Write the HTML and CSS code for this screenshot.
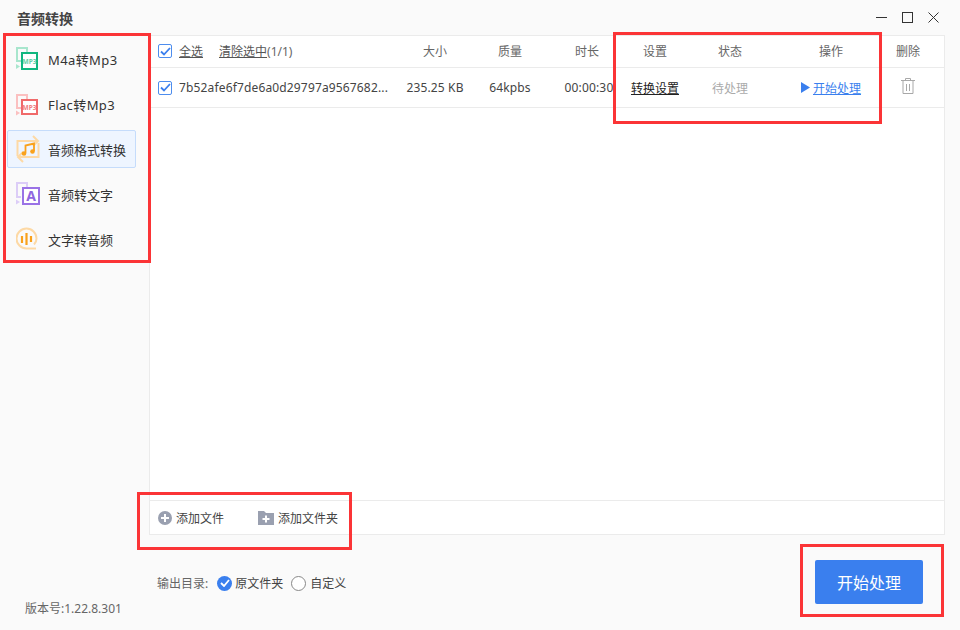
FILE: index.html
```html
<!DOCTYPE html>
<html lang="zh-CN">
<head>
    <meta charset="UTF-8">
    <title>音频转换</title>
    <link rel="stylesheet" href="styles.css">
</head>
<body>
    <div class="window">
        <!-- 标题栏 -->
        <div class="titlebar">
            <span class="title">音频转换</span>
            <div class="win-buttons">
                <svg width="11" height="11" viewBox="0 0 11 11"><path d="M0 5.500h11" stroke="#333" fill="none"/></svg>
                <svg width="11" height="11" viewBox="0 0 11 11"><rect x="0.500" y="0.500" width="10" height="10" stroke="#333" fill="none"/></svg>
                <svg width="11" height="11" viewBox="0 0 11 11"><path d="M0.500 0.500l10 10M10.500 0.500l-10 10" stroke="#333" fill="none"/></svg>
            </div>
        </div>

        <div class="main">
            <!-- 左侧菜单 -->
            <div class="sidebar">
                <div class="menu">
                    <div class="menu-item">
                        <svg class="menu-icon" width="24" height="24" viewBox="0 0 24 24">
                            <path d="M5 14H1V1h10v4" fill="none" stroke="#a8e6cd" stroke-width="2"/>
                            <path d="M0 17l4 2.500L0 22z" fill="#a8e6cd"/>
                            <rect x="6" y="6" width="15" height="16" fill="#fff" stroke="#10b77f" stroke-width="2"/>
                            <text class="icon-text" x="13.500" y="17" fill="#5fd0a5" text-anchor="middle">MP3</text>
                        </svg>
                        <span class="latin">M4a转Mp3</span>
                    </div>
                    <div class="menu-item">
                        <svg class="menu-icon" width="24" height="24" viewBox="0 0 24 24">
                            <path d="M5 16H1V3h10v4" fill="none" stroke="#fbc0c0" stroke-width="2"/>
                            <path d="M0 18.500l4 2.500-4 2.500z" fill="#fbc0c0"/>
                            <rect x="6" y="8" width="15" height="14" fill="#fff" stroke="#f06a6a" stroke-width="2"/>
                            <text class="icon-text" x="13.500" y="18" fill="#f07f7f" text-anchor="middle">MP3</text>
                        </svg>
                        <span class="latin">Flac转Mp3</span>
                    </div>
                    <div class="menu-item active">
                        <svg class="menu-icon" width="24" height="28" viewBox="0 0 24 28">
                            <path d="M1.500 21V6H22" fill="none" stroke="#fdd9a5" stroke-width="2"/>
                            <path d="M17 1l5 5-5 5" fill="none" stroke="#fdd9a5" stroke-width="2"/>
                            <path d="M22.500 8v14H2" fill="none" stroke="#fdd9a5" stroke-width="2"/>
                            <path d="M7 17l-5 5 5 5" fill="none" stroke="#fdd9a5" stroke-width="2"/>
                            <path d="M9.500 18V10.500l8.500-2V16" fill="none" stroke="#f9a11b" stroke-width="1.800"/>
                            <circle cx="8" cy="18.500" r="2.300" fill="#f9a11b"/>
                            <circle cx="16.500" cy="16.500" r="2.300" fill="#f9a11b"/>
                        </svg>
                        <span>音频格式转换</span>
                    </div>
                    <div class="menu-item">
                        <svg class="menu-icon" width="24" height="24" viewBox="0 0 24 24">
                            <path d="M5 15H1V1h10v4" fill="none" stroke="#dccdf7" stroke-width="2"/>
                            <path d="M0 17.500l4 2.500-4 2.500z" fill="#dccdf7"/>
                            <rect x="7" y="6" width="16" height="16" fill="#fff" stroke="#9a72e6" stroke-width="2"/>
                            <text class="icon-letter" x="15" y="19" fill="#8f66e0" text-anchor="middle">A</text>
                        </svg>
                        <span>音频转文字</span>
                    </div>
                    <div class="menu-item">
                        <svg class="menu-icon" width="24" height="24" viewBox="0 0 24 24">
                            <path d="M20 21.500h-9.500A10 10 0 1 1 20.500 11.500c0 2.500-1 4.500-2.500 6" fill="none" stroke="#fdd9a5" stroke-width="2"/>
                            <path d="M6 9v7M10.500 6v12M15 9v6" stroke="#f9a11b" stroke-width="2.200" fill="none"/>
                        </svg>
                        <span>文字转音频</span>
                    </div>
                </div>
                <div class="version">版本号:1.22.8.301</div>
            </div>

            <div class="content">
                <!-- 文件列表 -->
                <div class="panel">
                    <div class="row head">
                        <div class="cell-name">
                            <span class="check"><svg width="11" height="9" viewBox="0 0 11 9"><path d="M1 4.500l3 3 6-6.500" fill="none" stroke="#3a7fee" stroke-width="1.800"/></svg></span>
                            <a class="link-plain select-all">全选</a>
                            <span><a class="link-plain">清除选中</a>(1/1)</span>
                        </div>
                        <div class="cell">大小</div>
                        <div class="cell">质量</div>
                        <div class="cell">时长</div>
                        <div class="cell">设置</div>
                        <div class="cell">状态</div>
                        <div class="cell">操作</div>
                        <div class="cell">删除</div>
                    </div>
                    <div class="row file">
                        <div class="cell-name">
                            <span class="check"><svg width="11" height="9" viewBox="0 0 11 9"><path d="M1 4.500l3 3 6-6.500" fill="none" stroke="#3a7fee" stroke-width="1.800"/></svg></span>
                            <span class="file-name">7b52afe6f7de6a0d29797a9567682...</span>
                        </div>
                        <div class="cell num">235.25 KB</div>
                        <div class="cell num">64kpbs</div>
                        <div class="cell num duration">00:00:30</div>
                        <div class="cell"><a class="link-dark">转换设置</a></div>
                        <div class="cell muted">待处理</div>
                        <div class="cell action">
                            <svg width="9" height="11" viewBox="0 0 9 11"><path d="M0 0l9 5.500L0 11z" fill="#3a7fee"/></svg>
                            <a class="link-blue">开始处理</a>
                        </div>
                        <div class="cell">
                            <svg class="trash" width="14" height="16" viewBox="0 0 14 16"><path d="M0 2.500h14M4.500 2V0.500h5V2M2 3v12.500h10V3M5.500 6v7M8.500 6v7" fill="none" stroke="#a8a8a8"/></svg>
                        </div>
                    </div>
                    <div class="list-space"></div>
                    <div class="toolbar">
                        <span class="tool">
                            <svg width="14" height="14" viewBox="0 0 14 14"><circle cx="7" cy="7" r="7" fill="#9aa0b0"/><path d="M3 7h8M7 3v8" stroke="#fff" stroke-width="2"/></svg>
                            添加文件
                        </span>
                        <span class="tool">
                            <svg width="16" height="14" viewBox="0 0 16 14"><path d="M0 0h6l2 2h8v12H0z" fill="#9aa0b0"/><path d="M4.500 8h7M8 4.500v7" stroke="#fff" stroke-width="2"/></svg>
                            添加文件夹
                        </span>
                    </div>
                </div>

                <!-- 底部 -->
                <div class="bottom">
                    <div class="output">
                        <span class="output-label">输出目录:</span>
                        <span class="radio-on"><svg width="10" height="8" viewBox="0 0 10 8"><path d="M1 4l3 3 5-6" fill="none" stroke="#fff" stroke-width="1.800"/></svg></span>
                        <span class="radio-text">原文件夹</span>
                        <span class="radio-off"></span>
                        <span class="radio-text">自定义</span>
                    </div>
                    <button class="start-button" type="button">开始处理</button>
                </div>
            </div>
        </div>

        <!-- 标注框 -->
        <div class="mark mark-menu"></div>
        <div class="mark mark-columns"></div>
        <div class="mark mark-add"></div>
        <div class="mark mark-start"></div>
    </div>
</body>
</html>
```

FILE: styles.css
```css
* {
    box-sizing: border-box;
}
body {
    margin: 0;
    font-family: "Noto Sans", "Noto Sans CJK SC", sans-serif;
    font-size: 12px;
    color: #333;
    background-color: #fafafa;
    overflow: hidden;
}
.window {
    position: relative;
    width: 960px;
    height: 630px;
    display: flex;
    flex-direction: column;
}
.titlebar {
    height: 35px;
    display: flex;
    align-items: center;
    justify-content: space-between;
    padding: 0 21px 0 17px;
}
.title {
    font-size: 14px;
    font-weight: bold;
    color: #444;
}
.win-buttons {
    display: flex;
    gap: 15px;
}
.main {
    flex: 1;
    display: flex;
}
.sidebar {
    width: 149px;
    padding: 5px 0 0 7px;
    display: flex;
    flex-direction: column;
    justify-content: space-between;
}
.menu {
    display: flex;
    flex-direction: column;
    gap: 7px;
    width: 129px;
}
.menu-item {
    height: 38px;
    display: flex;
    align-items: center;
    gap: 8px;
    padding-left: 8px;
    font-size: 13px;
    color: #333;
    border: 1px solid transparent;
    border-radius: 2px;
}
.menu-item.active {
    background-color: #eef5ff;
    border-color: #c5dcfb;
}
.menu-icon {
    flex: none;
}
.icon-text {
    font-family: "Noto Sans", sans-serif;
    font-size: 6.500px;
    font-weight: bold;
}
.icon-letter {
    font-family: "Noto Sans", sans-serif;
    font-size: 14px;
    font-weight: bold;
}
.latin {
    letter-spacing: 0.4px;
}
.version {
    margin: 0 0 13px 18px;
    color: #666;
}
.content {
    flex: 1;
    display: flex;
    flex-direction: column;
    padding-right: 15px;
}
.panel {
    height: 500px;
    display: flex;
    flex-direction: column;
    background: white;
    border: 1px solid #ebebeb;
}
.row {
    display: grid;
    grid-template-columns: 248px 74px 76px 78px 58px 92px 110px 44px;
    align-items: center;
    border-bottom: 1px solid #ebebeb;
}
.head {
    height: 32px;
    padding-bottom: 1px;
    color: #666;
}
.file {
    height: 40px;
    color: #444;
}
.cell {
    display: flex;
    align-items: center;
    justify-content: center;
    white-space: nowrap;
    overflow: hidden;
}
.cell-name {
    display: flex;
    align-items: center;
    padding-left: 8px;
}
.check {
    width: 14px;
    height: 14px;
    margin-right: 7px;
    display: flex;
    align-items: center;
    justify-content: center;
    border: 1px solid #4d8dee;
    border-radius: 2px;
}
.select-all {
    margin-right: 16px;
}
.file-name {
    letter-spacing: 0.15px;
}
.num {
    letter-spacing: 0.15px;
}
.duration {
    padding-left: 4px;
}
.trash {
    margin-bottom: 4px;
}
.link-plain {
    text-decoration: underline;
    color: #555;
}
.link-dark {
    text-decoration: underline;
    color: #222;
}
.link-blue {
    text-decoration: underline;
    color: #3a7fee;
}
.muted {
    color: #aaa;
}
.action {
    gap: 3px;
}
.list-space {
    flex: 1;
}
.toolbar {
    height: 34px;
    display: flex;
    align-items: center;
    gap: 34px;
    padding-left: 8px;
    border-top: 1px solid #ebebeb;
}
.tool {
    display: flex;
    align-items: center;
    gap: 4px;
    color: #444;
}
.bottom {
    flex: 1;
    display: flex;
    align-items: flex-start;
    justify-content: space-between;
    padding: 25px 22px 0 8px;
}
.output {
    display: flex;
    align-items: center;
    height: 44px;
    margin-top: 1px;
    color: #444;
}
.output-label {
    color: #666;
    margin-right: 9px;
}
.radio-on {
    width: 15px;
    height: 15px;
    border-radius: 50%;
    background-color: #3a7fee;
    display: flex;
    align-items: center;
    justify-content: center;
}
.radio-off {
    width: 15px;
    height: 15px;
    margin-left: 8px;
    border-radius: 50%;
    border: 1px solid #888;
    background: white;
}
.radio-text {
    margin-left: 3px;
}
.radio-off + .radio-text {
    margin-left: 4px;
}
.start-button {
    width: 108px;
    height: 44px;
    font-family: inherit;
    font-size: 16px;
    color: white;
    background-color: #3a7fee;
    border: none;
    border-radius: 2px;
}
.mark {
    position: absolute;
    border: 3px solid #fb3436;
    pointer-events: none;
}
.mark-menu {
    left: 3px;
    top: 33px;
    width: 148px;
    height: 230px;
}
.mark-columns {
    left: 613px;
    top: 32px;
    width: 269px;
    height: 92px;
}
.mark-add {
    left: 137px;
    top: 492px;
    width: 215px;
    height: 58px;
}
.mark-start {
    left: 800px;
    top: 544px;
    width: 144px;
    height: 73px;
}
```
